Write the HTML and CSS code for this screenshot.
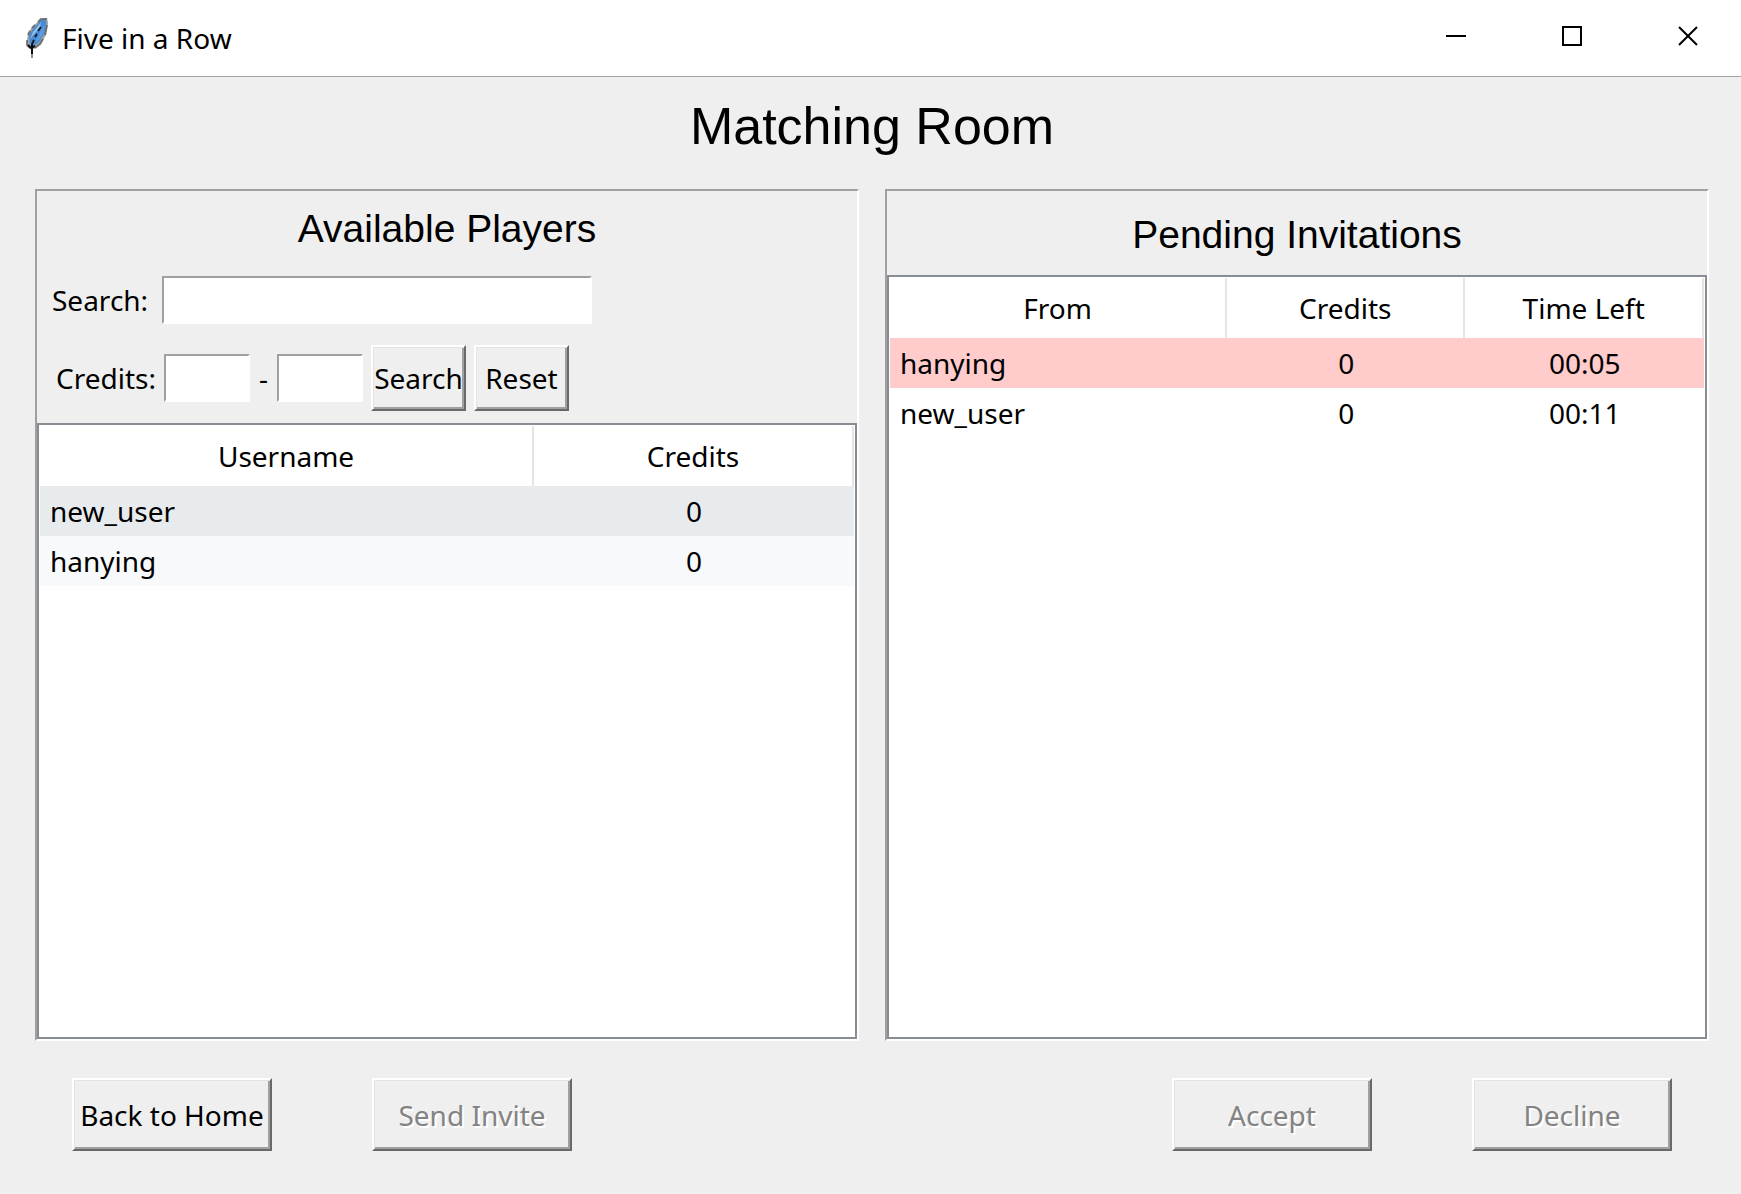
FILE: index.html
```
<!DOCTYPE html>
<html lang="en">
<head>
<meta charset="utf-8">
<title>Five in a Row</title>
<link rel="stylesheet" href="styles.css">
</head>
<body>
<header class="titlebar">
  <svg class="feather" width="24" height="40" viewBox="0 0 24 40" aria-hidden="true">
    <path d="M15 1 L21 0 L22 5 L20 17 L15 26 L8 31 L2 29 L1 23 L2 15 L6 9 Z" fill="#9da2a5"/>
    <path d="M15 2 L20 2 L20 7 L18 16 L13 24 L8 28 L4 26 L3 17 L7 11 Z" fill="#4a8ad0"/>
    <path d="M15 4 L11 9 L7 14 L4 21 L9 15 L14 10 Z" fill="#93bfe9"/>
    <path d="M19 6 L15 12 L12 19 L9 24 L13 22 L17 16 Z" fill="#5c9ce4"/>
    <path d="M21 1 L15 1 L12 4 M9 7 L6 10 M4 13 L2 17 M1 22 L1 27 L4 30 M21 7 L19 17 M17 21 L14 26 L9 30" fill="none" stroke="#5c6468" stroke-width="2" opacity=".8"/>
    <path d="M15 9 L12 13 M11 16 L9 19 M8 22 L6 26" fill="none" stroke="#101c2a" stroke-width="2"/>
    <path d="M2 27 L5 30 L9 28 M6 26 L6 36" fill="none" stroke="#0b0f14" stroke-width="2"/>
    <path d="M6 36 V40" stroke="#8b8b8b" stroke-width="2"/>
  </svg>
  <span class="app-name">Five in a Row</span>
  <div class="window-controls">
    <button type="button" aria-label="Minimize"><svg width="20" height="20" viewBox="0 0 20 20"><path d="M0 10H20" stroke="#000" stroke-width="2"/></svg></button>
    <button type="button" aria-label="Maximize"><svg width="20" height="20" viewBox="0 0 20 20"><path d="M1 1H19V19H1Z" fill="none" stroke="#000" stroke-width="2"/></svg></button>
    <button type="button" aria-label="Close"><svg width="20" height="20" viewBox="0 0 20 20"><path d="M1 1L19 19M19 1L1 19" stroke="#000" stroke-width="2"/></svg></button>
  </div>
</header>
<main class="room">
  <h1>Matching Room</h1>
  <div class="panels">
    <section class="panel">
      <h2>Available Players</h2>
      <form class="filters">
        <div class="filter-row">
          <label for="name">Search:</label>
          <input class="field name-field" id="name" type="text">
        </div>
        <div class="filter-row credits-row">
          <label for="min">Credits:</label>
          <input class="field" id="min" type="text">
          <span class="dash">-</span>
          <input class="field" id="max" type="text" aria-label="Maximum credits">
          <button class="btn small" type="button">Search</button>
          <button class="btn small" type="reset">Reset</button>
        </div>
      </form>
      <div class="tree">
        <table class="players">
          <thead><tr><th>Username</th><th>Credits</th></tr></thead>
          <tbody>
            <tr class="even"><td>new_user</td><td>0</td></tr>
            <tr class="odd"><td>hanying</td><td>0</td></tr>
          </tbody>
        </table>
      </div>
    </section>
    <section class="panel invitations">
      <h2>Pending Invitations</h2>
      <div class="tree">
        <table class="invites">
          <thead><tr><th>From</th><th>Credits</th><th>Time Left</th></tr></thead>
          <tbody>
            <tr class="urgent"><td>hanying</td><td>0</td><td>00:05</td></tr>
            <tr><td>new_user</td><td>0</td><td>00:11</td></tr>
          </tbody>
        </table>
      </div>
    </section>
  </div>
  <footer class="actions">
    <div class="group">
      <button class="btn" type="button">Back to Home</button>
      <button class="btn" type="button" disabled>Send Invite</button>
    </div>
    <div class="group">
      <button class="btn" type="button" disabled>Accept</button>
      <button class="btn" type="button" disabled>Decline</button>
    </div>
  </footer>
</main>
</body>
</html>
```
FILE: styles.css
```
* {
  box-sizing: border-box;
}

body {
  margin: 0;
  min-height: 100vh;
  display: flex;
  flex-direction: column;
  background: #efefef;
  color: #000;
  font-family: "Noto Sans", "Open Sans", sans-serif;
  font-size: 28px;
  line-height: 36px;
}

button,
input {
  font: inherit;
  color: inherit;
}

h1,
h2 {
  margin: 0;
  font-family: "Liberation Sans", Arial, sans-serif;
  font-weight: 400;
  text-align: center;
}

/* Title bar */
.titlebar {
  display: flex;
  align-items: center;
  height: 77px;
  padding-left: 26px;
  background: #fff;
  border-bottom: 1px solid #a5a7a5;
}

.feather {
  margin-right: 12px;
}

.window-controls {
  display: flex;
  align-self: flex-start;
  gap: 10px;
  margin-left: auto;
}

.window-controls button {
  display: flex;
  align-items: center;
  justify-content: center;
  width: 106px;
  height: 72px;
  padding: 0;
  border: 0;
  background: none;
}

/* Room */
.room {
  flex: 1;
  display: flex;
  flex-direction: column;
  padding: 19px 32px 43px 35px;
}

h1 {
  font-size: 52px;
  line-height: 60px;
  margin-bottom: 33px;
}

.panels {
  flex: 1;
  display: grid;
  grid-template-columns: 1fr 1fr;
  gap: 26px;
}

.panel {
  display: flex;
  flex-direction: column;
  padding-top: 14px;
  border: 2px solid;
  border-color: #a0a0a0 #fff #fff #a0a0a0;
}

h2 {
  font-size: 39px;
  line-height: 48px;
}

.invitations {
  padding-top: 20px;
}

.invitations h2 {
  margin-bottom: 16px;
}

/* Filters */
.filters {
  display: flex;
  flex-direction: column;
  gap: 21px;
  padding: 23px 15px 12px;
}

.filter-row {
  display: flex;
  align-items: center;
}

.filter-row label {
  margin-right: 14px;
}

.field {
  width: 86px;
  height: 48px;
  padding: 0 4px;
  border: 2px solid;
  border-color: #a0a0a0 #fff #fff #a0a0a0;
  background: #fff;
}

.name-field {
  width: 430px;
}

.credits-row {
  padding-left: 4px;
}

.credits-row label {
  margin-right: 8px;
}

.dash {
  width: 27px;
  text-align: center;
}

/* Raised buttons */
.btn {
  width: 200px;
  height: 73px;
  padding: 0;
  border: 2px solid;
  border-color: #fff #696969 #696969 #fff;
  background: #efefef;
  box-shadow: inset 1px 1px #e3e3e3, inset -2px -2px #a0a0a0;
  white-space: nowrap;
}

.btn:disabled {
  color: #838383;
  text-shadow: 2px 2px #fff;
}

.small {
  width: 95px;
  height: 66px;
  margin-left: 8px;
}

/* Lists */
.tree {
  flex: 1;
  padding: 1px;
  border: 2px solid #878c95;
  background: #fff;
}

table {
  width: 100%;
  table-layout: fixed;
  border-collapse: separate;
  border-spacing: 0;
}

th,
td {
  height: 50px;
  padding: 0 10px;
  font-weight: 400;
  text-align: center;
}

th {
  height: 60px;
  border-right: 2px solid #e5e5e5;
}

td:first-child {
  text-align: left;
}

.players th:first-child {
  width: 60.7%;
}

.invites th:first-child {
  width: 41.4%;
}

.even {
  background: #e8ebee;
}

.odd {
  background: #f8f9fb;
}

.urgent {
  background: #ffcbcb;
}

/* Footer */
.actions {
  display: flex;
  justify-content: space-between;
  padding: 37px 37px 0;
}

.group {
  display: flex;
  gap: 100px;
}
```
